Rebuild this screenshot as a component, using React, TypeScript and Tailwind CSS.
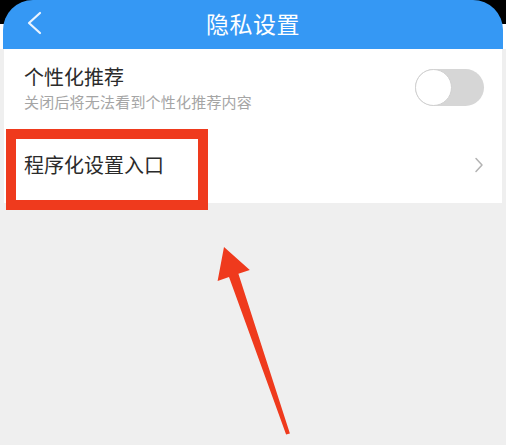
export default function App() {
    return (
        <div
            className="relative w-[506px] h-[445px] overflow-hidden bg-[#efefef]"
            style={{ fontFamily: '"Noto Sans CJK SC", "Noto Sans", sans-serif' }}
        >
            <div className="bg-[linear-gradient(to_bottom,#000_50%,#fff_50%)] px-[3px]">
                <div className="relative h-[49px] bg-[#3598f4] rounded-t-[30px] flex items-center justify-center">
                    <svg className="absolute left-[22px] top-[11px]" width="20" height="24" viewBox="0 0 20 24" fill="none">
                        <polyline points="15,2 4,12 15,22" stroke="#eaf4ff" strokeWidth="2.2" strokeLinecap="round" strokeLinejoin="round" />
                    </svg>
                    <h1 className="text-[23px] leading-none text-white tracking-[0.5px] -mt-[3px]">隐私设置</h1>
                </div>
            </div>

            <div className="bg-white mx-[4px]">
                <div className="h-[78px] flex items-center justify-between pl-[20px] pr-[18px]">
                    <div className="flex flex-col gap-[3px]">
                        <span className="text-[20px] leading-[24px] text-[#2b2b2b]">个性化推荐</span>
                        <span className="text-[15px] leading-[20px] tracking-[0.2px] text-[#a5a5a5]">关闭后将无法看到个性化推荐内容</span>
                    </div>
                    <div className="w-[69px] h-[37px] rounded-full bg-[#d6d6d6] flex items-center -mt-[1px]">
                        <div className="w-[37px] h-[37px] rounded-full bg-white border border-[#d0d0d0]" />
                    </div>
                </div>
                <div className="h-[76px] flex items-center justify-between pl-[20px] pr-[18px]">
                    <span className="text-[20px] leading-[24px] text-[#2b2b2b]">程序化设置入口</span>
                    <svg width="10" height="16" viewBox="0 0 10 16" fill="none">
                        <polyline points="2,1.5 8,8 2,14.5" stroke="#b3b3b3" strokeWidth="1.5" strokeLinecap="round" strokeLinejoin="round" />
                    </svg>
                </div>
            </div>

            <div className="absolute left-[6px] top-[129px] w-[202px] h-[81px] border-[10px] border-[#ef3a1d]" />

            <svg className="absolute inset-0 pointer-events-none" width="506" height="445" viewBox="0 0 506 445">
                <polygon
                    points="224,247 249.8,269.9 238.4,273.8 289.9,433.4 286.1,434.6 229,277 217.6,280.9"
                    fill="#ef3a1d"
                />
            </svg>
        </div>
    )
}
